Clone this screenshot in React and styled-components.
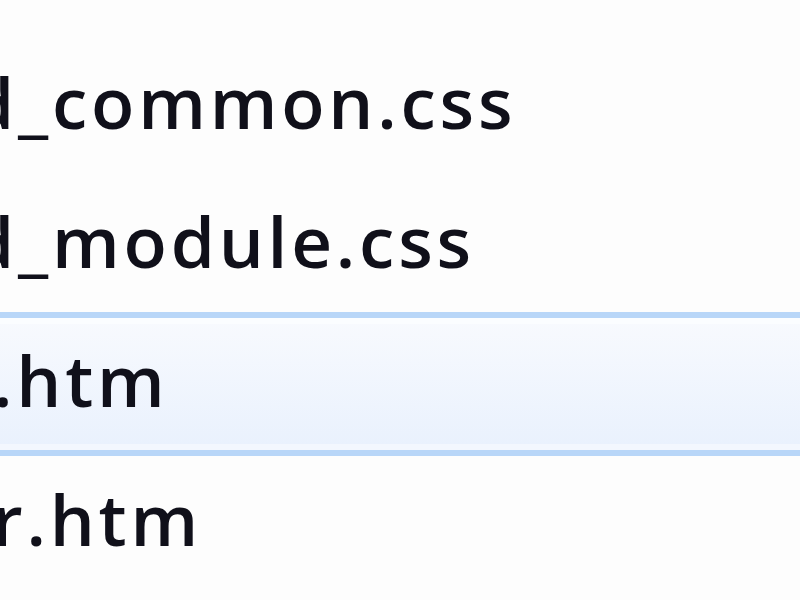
import styled, { createGlobalStyle } from 'styled-components';

const files = [
  { id: 1, name: 'd_common.css', shift: -30 },
  { id: 2, name: 'd_module.css', shift: -30 },
  { id: 3, name: '.htm', shift: -7, selected: true },
  { id: 4, name: 'r.htm', shift: -8 },
];

const GlobalStyle = createGlobalStyle`
  html, body {
    margin: 0;
    padding: 0;
    background: #fdfdfd;
  }
`;

const App = () => {
  return (
    <>
      <GlobalStyle />
      <List>
        {files.map((file) => (
          <Row key={file.id} $selected={file.selected}>
            <Name $shift={file.shift}>{file.name}</Name>
          </Row>
        ))}
      </List>
    </>
  );
};

const List = styled.ul`
  list-style: none;
  margin: 0;
  padding: 34px 0 0;
  width: 800px;
  height: 600px;
  overflow: hidden;
  box-sizing: border-box;
  background: #fdfdfd;
`;

const Row = styled.li`
  display: flex;
  align-items: center;
  height: 144px;
  margin-bottom: -5px;
  padding-bottom: 10px;
  box-sizing: border-box;
  border: 6px solid ${({ $selected }) => ($selected ? '#b8d6f8' : 'transparent')};
  border-left: none;
  border-right: none;
  background: ${({ $selected }) =>
    $selected ? 'linear-gradient(to bottom, #f8fafe, #e9f1fd)' : 'transparent'};
  box-shadow: ${({ $selected }) =>
    $selected ? 'inset 0 6px 0 #fbfdff, inset 0 -6px 0 #f3f7fe' : 'none'};
  overflow: hidden;
`;

const Name = styled.span`
  margin-left: ${({ $shift }) => $shift}px;
  font-family: 'Open Sans', 'Noto Sans', sans-serif;
  font-size: 71px;
  font-weight: 550;
  letter-spacing: 3.8px;
  line-height: 1;
  color: #10101a;
  white-space: nowrap;
`;

export default App;
